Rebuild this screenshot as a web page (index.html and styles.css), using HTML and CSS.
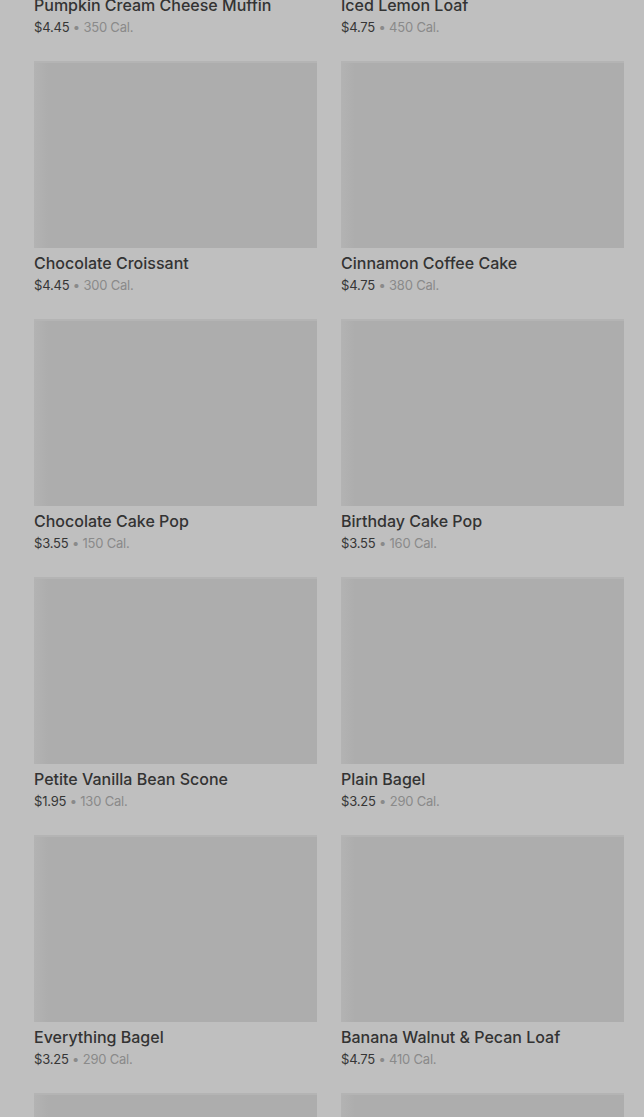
FILE: index.html
```html
<!DOCTYPE html>
<html lang="en">
<head>
    <meta charset="UTF-8">
    <meta name="viewport" content="width=device-width, initial-scale=1.0">
    <title>Bakery</title>
    <link rel="stylesheet" href="styles.css">
</head>
<body>
    <main class="menu">
        <div class="item">
            <div class="thumb"></div>
            <div class="name">Pumpkin Cream Cheese Muffin</div>
            <div class="meta"><span class="price">$4.45</span> • 350 Cal.</div>
        </div>
        <div class="item">
            <div class="thumb"></div>
            <div class="name">Iced Lemon Loaf</div>
            <div class="meta"><span class="price">$4.75</span> • 450 Cal.</div>
        </div>
        <div class="item">
            <div class="thumb"></div>
            <div class="name">Chocolate Croissant</div>
            <div class="meta"><span class="price">$4.45</span> • 300 Cal.</div>
        </div>
        <div class="item">
            <div class="thumb"></div>
            <div class="name">Cinnamon Coffee Cake</div>
            <div class="meta"><span class="price">$4.75</span> • 380 Cal.</div>
        </div>
        <div class="item">
            <div class="thumb"></div>
            <div class="name">Chocolate Cake Pop</div>
            <div class="meta"><span class="price">$3.55</span> • 150 Cal.</div>
        </div>
        <div class="item">
            <div class="thumb"></div>
            <div class="name">Birthday Cake Pop</div>
            <div class="meta"><span class="price">$3.55</span> • 160 Cal.</div>
        </div>
        <div class="item">
            <div class="thumb"></div>
            <div class="name">Petite Vanilla Bean Scone</div>
            <div class="meta"><span class="price">$1.95</span> • 130 Cal.</div>
        </div>
        <div class="item">
            <div class="thumb"></div>
            <div class="name">Plain Bagel</div>
            <div class="meta"><span class="price">$3.25</span> • 290 Cal.</div>
        </div>
        <div class="item">
            <div class="thumb"></div>
            <div class="name">Everything Bagel</div>
            <div class="meta"><span class="price">$3.25</span> • 290 Cal.</div>
        </div>
        <div class="item">
            <div class="thumb"></div>
            <div class="name">Banana Walnut &amp; Pecan Loaf</div>
            <div class="meta"><span class="price">$4.75</span> • 410 Cal.</div>
        </div>
        <div class="item">
            <div class="thumb"></div>
        </div>
        <div class="item">
            <div class="thumb"></div>
        </div>
    </main>
</body>
</html>
```

FILE: styles.css
```css
html, body {
    margin: 0;
    padding: 0;
    height: 100%;
    overflow: hidden;
}
body {
    background: #bfbfbf;
    font-family: Inter, Roboto, "Liberation Sans", sans-serif;
}
.menu {
    display: grid;
    grid-template-columns: 283px 283px;
    column-gap: 24px;
    row-gap: 25px;
    padding: 0 20px 0 34px;
    margin-top: -197px; /* list is scrolled */
}
.thumb {
    height: 187px;
    background: linear-gradient(to right, #b3b3b3 0, #adadad 14px, #adadad 100%);
    box-shadow: inset 0 6px 0 -4px #b4b4b4;
}
.name {
    margin-top: 5px;
    font-size: 16px;
    line-height: 20px;
    font-weight: 500;
    color: #333;
    white-space: nowrap;
}
.meta {
    margin-top: 3px;
    font-size: 13px;
    line-height: 18px;
    letter-spacing: -0.2px;
    color: #8a8a8a;
}
.price {
    color: #363636;
}
```
